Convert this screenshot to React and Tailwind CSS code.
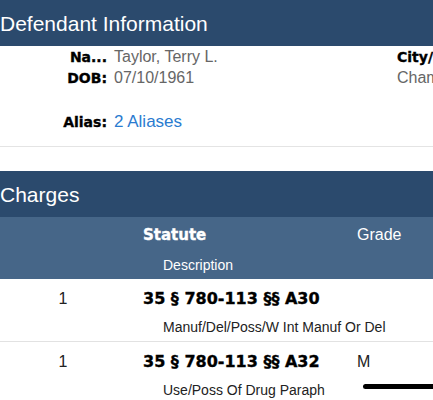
// Case detail view: defendant summary plus the list of charges.

const charges = [
  { seq: "1", statute: "35 § 780-113 §§ A30", grade: "", description: "Manuf/Del/Poss/W Int Manuf Or Del" },
  { seq: "1", statute: "35 § 780-113 §§ A32", grade: "M", description: "Use/Poss Of Drug Paraph" },
];

const sans = "font-['Liberation_Sans',Arial,sans-serif]";
// heavy labels: DejaVu bold with a hairline stroke to get closer to a black weight
const heavy = "font-['DejaVu_Sans',sans-serif] font-bold [-webkit-text-stroke:0.35px_currentColor]";

const SectionHeader = ({ title }) => (
  <div className={`h-[46px] bg-[#2b4a6d] text-white text-[21px] flex items-center pt-[1px] ${sans}`}>
    {title}
  </div>
);

const InfoRow = ({ label, children, className = "" }) => (
  <div className={`flex items-center ${className}`}>
    <span className={`w-[107px] text-right text-[14px] text-black ${heavy}`}>{label}</span>
    <span className="ml-[7px] whitespace-nowrap">{children}</span>
  </div>
);

const App = () => {
  return (
    <div className={`relative w-[433px] h-[400px] overflow-hidden bg-white ${sans}`}>
      <SectionHeader title="Defendant Information" />

      {/* Defendant details */}
      <div className="flex pt-[1px]">
        <div className="w-[397px] shrink-0">
          <InfoRow label="Na..." className="h-[20px]">
            <span className="text-[16px] text-[#666]">Taylor, Terry L.</span>
          </InfoRow>
          <InfoRow label="DOB:" className="h-[22px]">
            <span className="text-[16px] text-[#666]">07/10/1961</span>
          </InfoRow>
          <InfoRow label="Alias:" className="h-[22px] mt-[22px] mb-[13px]">
            <span className="text-[17px] text-[#2a7bd0]">2 Aliases</span>
          </InfoRow>
        </div>
        <div className="whitespace-nowrap">
          <div className={`h-[20px] flex items-center text-[14px] text-black ${heavy}`}>City/State</div>
          <div className="h-[22px] flex items-center text-[16px] text-[#666]">Champaign</div>
        </div>
      </div>
      <div className="h-px bg-[#e4e4e4]" />

      <div className="h-[24px]" />

      <SectionHeader title="Charges" />

      {/* Column headings */}
      <div className="bg-[#466688] text-white h-[62px]">
        <div className="h-[36px] flex items-center">
          <span className="w-[143px]" />
          <span className={`w-[214px] text-[15px] ${heavy}`}>Statute</span>
          <span className="text-[16px]">Grade</span>
        </div>
        <div className="h-[24px] flex items-center pl-[163px] text-[14px]">Description</div>
      </div>

      {charges.map((charge, i) => (
        <div key={i} className="border-b border-[#e2e2e2] pb-[6px]">
          <div className="h-[40px] flex items-center">
            <span className="w-[126px] text-center text-[16px] text-[#222]">{charge.seq}</span>
            <span className={`ml-[17px] w-[214px] text-[16px] text-black ${heavy}`}>{charge.statute}</span>
            <span className="text-[16px] text-[#222]">{charge.grade}</span>
          </div>
          <div className="h-[16px] flex items-center pl-[163px] text-[14px] text-[#222]">
            {charge.description}
          </div>
        </div>
      ))}

      {/* home indicator */}
      <div className="absolute left-[363px] top-[384px] w-[140px] h-[5px] rounded-full bg-black" />
    </div>
  );
};

export default App;
